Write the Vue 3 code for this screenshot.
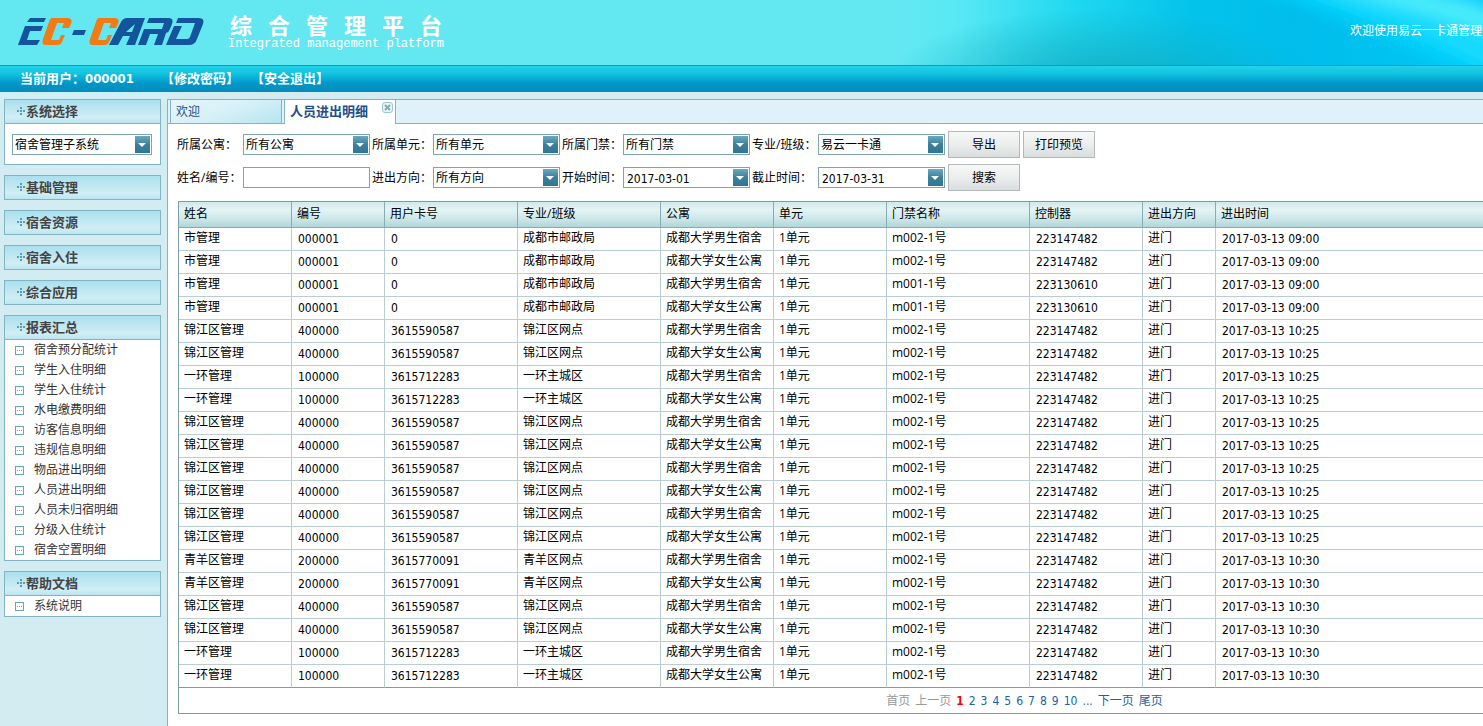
<script setup>
import { ref } from 'vue'

const system = ref('宿舍管理子系统')
const title = [...'综合管理平台']
const collapsed = ['基础管理', '宿舍资源', '宿舍入住', '综合应用']
const reports = [
  '宿舍预分配统计', '学生入住明细', '学生入住统计', '水电缴费明细', '访客信息明细', '违规信息明细',
  '物品进出明细', '人员进出明细', '人员未归宿明细', '分级入住统计', '宿舍空置明细'
]
const columns = ['姓名', '编号', '用户卡号', '专业/班级', '公寓', '单元', '门禁名称', '控制器', '进出方向', '进出时间']
const people = {
  s: ['市管理', '000001', '0', '成都市邮政局'],
  j: ['锦江区管理', '400000', '3615590587', '锦江区网点'],
  h: ['一环管理', '100000', '3615712283', '一环主城区'],
  q: ['青羊区管理', '200000', '3615770091', '青羊区网点']
}
const rows = [...'ssssjjhhjjjjjjqqjjhh'].map((k, i) => {
  const old = i === 2 || i === 3
  const time = i < 4 ? '09:00' : i < 14 ? '10:25' : '10:30'
  return [
    ...people[k],
    i % 2 ? '成都大学女生公寓' : '成都大学男生宿舍',
    '1单元',
    old ? 'm001-1号' : 'm002-1号',
    old ? '223130610' : '223147482',
    '进门',
    '2017-03-13 ' + time
  ]
})
const numeric = new Set([1, 2, 7, 9])
const pages = ['2', '3', '4', '5', '6', '7', '8', '9', '10', '...']
</script>

<template>
  <div class="page">
    <header class="banner">
      <svg class="art" viewBox="0 0 583 65" preserveAspectRatio="none" aria-hidden="true">
        <defs>
          <linearGradient id="sea" x1="0" y1="0" x2="1" y2="0">
            <stop offset="0" stop-color="#63e8f2" />
            <stop offset="0.1" stop-color="#58e8f4" />
            <stop offset="0.3" stop-color="#1fd8f0" />
            <stop offset="0.5" stop-color="#04c3ea" />
            <stop offset="0.68" stop-color="#00bdec" />
            <stop offset="1" stop-color="#00c8f4" />
          </linearGradient>
          <radialGradient id="shade">
            <stop offset="0" stop-color="#12a9bd" stop-opacity="0.85" />
            <stop offset="1" stop-color="#12a9bd" stop-opacity="0" />
          </radialGradient>
          <filter id="soft" x="-20%" y="-50%" width="140%" height="200%"><feGaussianBlur stdDeviation="7" /></filter>
        </defs>
        <rect width="583" height="65" fill="url(#sea)" />
        <ellipse cx="200" cy="80" rx="210" ry="72" fill="url(#shade)" />
        <g filter="url(#soft)">
          <path d="M350 -12 Q460 18 583 84 V-12Z" fill="#00d0fc" />
          <path d="M390 -12 Q490 18 600 75 V30 Q530 0 480 -12Z" fill="#12dafd" />
          <path d="M425 -12 Q510 8 600 36 V12 L510 -12Z" fill="#48ecfa" />
        </g>
      </svg>
      <svg class="logo" width="188" height="30" viewBox="0 0 188 30" role="img" aria-label="EC-CARD">
        <g fill="#12559c">
          <path d="M12 1H28L26 5H9ZM7 9H25L23 14H12L9 23H22L19 28H0Z" />
          <path d="M56 13H68L66 18H54Z" />
          <path d="M107 1H127L117 28H108L112 19H105L100 28H91L103 5Q105 1 109 1ZM117 7L108 15H114Z" />
          <path d="M131 1H151Q156 1 154 7L152 12Q151 15 148 16L144 28H136L140 17H132L128 28H120L126 12H144L146 6H129Z" />
          <path d="M160 1H181Q187 1 185 7L179 22Q177 28 171 28H148L156 9H164L158 22H169Q171 22 172 20L177 6H158Z" />
        </g>
        <g fill="#f07b17">
          <path d="M34 1H50Q55 1 53 7L51 11H44L46 6H39L33 23H41L43 18H47L44 25Q43 28 39 28H28Q23 28 25 22L31 5Q32 1 34 1Z" />
          <path d="M81 1H97Q102 1 100 7L98 11H91L93 6H86L80 23H88L90 18H94L91 25Q90 28 86 28H75Q70 28 72 22L78 5Q79 1 81 1Z" />
        </g>
      </svg>
      <div class="titles">
        <h1><span v-for="ch in title" :key="ch">{{ ch }}</span></h1>
        <p>Integrated management platform</p>
      </div>
      <p class="welcome">欢迎使用易云一卡通管理</p>
    </header>

    <nav class="userbar">
      <span class="current">当前用户：<b>000001</b></span>
      <a href="#password">【修改密码】</a>
      <a href="#logout">【安全退出】</a>
    </nav>

    <div class="body">
      <aside class="side">
        <section class="panel">
          <h2><i class="cross"></i>系统选择</h2>
          <div class="pick">
            <span class="combo">
              <select v-model="system" aria-label="系统选择"><option>宿舍管理子系统</option></select>
            </span>
          </div>
        </section>
        <section v-for="name in collapsed" :key="name" class="panel closed">
          <h2><i class="cross"></i>{{ name }}</h2>
        </section>
        <section class="panel">
          <h2><i class="cross"></i>报表汇总</h2>
          <ul>
            <li v-for="name in reports" :key="name"><a href="#report"><i class="leaf"></i>{{ name }}</a></li>
          </ul>
        </section>
        <section class="panel">
          <h2><i class="cross"></i>帮助文档</h2>
          <ul><li><a href="#help"><i class="leaf"></i>系统说明</a></li></ul>
        </section>
      </aside>

      <main class="main">
        <div class="tabs">
          <button type="button" class="tab">欢迎</button>
          <div class="tab active">
            <button type="button" class="name">人员进出明细</button>
            <button type="button" class="close" aria-label="关闭">
              <svg width="11" height="11" viewBox="0 0 11 11" aria-hidden="true">
                <rect x="0.5" y="0.5" width="10" height="10" rx="2.5" fill="#e6f4f4" stroke="#9cc6c8" />
                <path d="M3 3L8 8M8 3L3 8" stroke="#7fb0b4" stroke-width="2" />
              </svg>
            </button>
          </div>
        </div>

        <form class="filters" @submit.prevent>
          <label for="f1">所属公寓：</label>
          <span class="combo"><select id="f1"><option>所有公寓</option></select></span>
          <label for="f2">所属单元：</label>
          <span class="combo"><select id="f2"><option>所有单元</option></select></span>
          <label for="f3">所属门禁：</label>
          <span class="combo"><select id="f3"><option>所有门禁</option></select></span>
          <label for="f4">专业/班级：</label>
          <span class="combo"><select id="f4"><option>易云一卡通</option></select></span>
          <div class="actions">
            <button type="button">导出</button>
            <button type="button">打印预览</button>
          </div>
          <label for="f5">姓名/编号：</label>
          <input id="f5" type="text" class="plain" />
          <label for="f6">进出方向：</label>
          <span class="combo"><select id="f6"><option>所有方向</option></select></span>
          <label for="f7">开始时间：</label>
          <span class="combo date"><input id="f7" type="text" value="2017-03-01" /></span>
          <label for="f8">截止时间：</label>
          <span class="combo date"><input id="f8" type="text" value="2017-03-31" /></span>
          <div class="actions"><button type="submit">搜索</button></div>
        </form>

        <div class="grid">
          <table>
            <colgroup>
              <col class="w113" /><col class="w93" /><col class="w133" /><col class="w143" /><col class="w113" />
              <col class="w113" /><col class="w143" /><col class="w113" /><col class="w73" /><col />
            </colgroup>
            <thead>
              <tr><th v-for="c in columns" :key="c" scope="col">{{ c }}</th></tr>
            </thead>
            <tbody>
              <tr v-for="(row, r) in rows" :key="r">
                <td v-for="(cell, c) in row" :key="c" :class="{ num: numeric.has(c) }">{{ cell }}</td>
              </tr>
            </tbody>
          </table>
          <nav class="pager" aria-label="分页">
            <span class="off">首页</span>
            <span class="off">上一页</span>
            <b>1</b>
            <a v-for="p in pages" :key="p" class="digit" href="#page">{{ p }}</a>
            <a href="#next">下一页</a>
            <a href="#last">尾页</a>
          </nav>
        </div>
      </main>
    </div>
  </div>
</template>

<style>
body {
  margin: 0;
  background: #d3ecf2;
}
</style>

<style scoped>
.page {
  display: flex;
  flex-direction: column;
  height: 100vh;
  overflow: hidden;
  font: 12px/20px "Open Sans", "Noto Sans CJK SC", sans-serif;
  color: #000;
}
.page * {
  box-sizing: border-box;
}
h1, h2, p, ul {
  margin: 0;
  padding: 0;
}
a {
  color: inherit;
  text-decoration: none;
}
button, input, select {
  font: inherit;
  color: inherit;
}
.banner {
  position: relative;
  display: flex;
  flex: none;
  height: 65px;
  padding: 17px 0 0 18px;
  background: #63e8f2;
  overflow: hidden;
}
.art {
  position: absolute;
  top: 0;
  right: 0;
  width: 583px;
  height: 65px;
}
.logo {
  flex: none;
}
.titles {
  position: relative;
  margin: -6px 0 0 22px;
  color: #fff;
}
.titles h1 {
  display: flex;
  justify-content: space-between;
  padding: 0 2px;
  font: 700 22px/26px "Noto Sans CJK SC", sans-serif;
}
.titles p {
  font: 12px/14px "Liberation Mono", monospace;
  white-space: nowrap;
}
.welcome {
  position: relative;
  margin: 4px 1px 0 auto;
  height: 20px;
  color: #fff;
  white-space: nowrap;
}
.userbar {
  display: flex;
  flex: none;
  height: 27px;
  padding-left: 20px;
  border-top: 1px solid #1a97b7;
  background: linear-gradient(#22d2ea, #10c2de 30%, #0098cb 65%, #058bb9);
  color: #fff;
  font-size: 13px;
  font-weight: 700;
  line-height: 24px;
}
.userbar b {
  font-family: "DejaVu Sans Condensed", "DejaVu Sans", sans-serif;
}
.current {
  width: 141px;
}
.userbar a {
  width: 90px;
  white-space: nowrap;
}
.body {
  display: flex;
  flex: 1;
  min-height: 0;
}
.side {
  display: flex;
  flex: none;
  flex-direction: column;
  gap: 10px;
  width: 167px;
  padding: 7px 6px 0 4px;
  background: linear-gradient(#cdf0f8, #d3ecf2 20px);
}
.panel {
  border: 1px solid #83b4c1;
  background: #fff;
}
.panel h2 {
  display: flex;
  align-items: center;
  gap: 1px;
  height: 24px;
  padding: 0 0 2px 12px;
  border-bottom: 1px solid #83b4c1;
  background: linear-gradient(#a9e0ee, #bfe7f1 40%, #d0eef5 75%, #bbe6f1);
  color: #444;
  font-size: 13px;
  line-height: 20px;
}
.panel.closed h2 {
  height: 23px;
  border-bottom: 0;
}
.cross {
  flex: none;
  width: 8px;
  height: 8px;
  background:
    linear-gradient(#5d9cb0 0 0) 3px 0 / 2px 2px,
    linear-gradient(#5d9cb0 0 0) 0 3px / 2px 2px,
    linear-gradient(#5d9cb0 0 0) 3px 3px / 2px 2px,
    linear-gradient(#5d9cb0 0 0) 6px 3px / 2px 2px,
    linear-gradient(#5d9cb0 0 0) 3px 6px / 2px 2px;
  background-repeat: no-repeat;
}
.pick {
  padding: 10px 8px 9px 7px;
}
.panel ul {
  list-style: none;
}
.panel li a {
  display: flex;
  align-items: center;
  gap: 10px;
  height: 20px;
  padding-left: 10px;
  color: #333;
}
.leaf {
  width: 9px;
  height: 9px;
  border: 1px solid #6ba5b3;
  background:
    linear-gradient(#6ba5b3 0 0) 1px 3px / 1px 1px,
    linear-gradient(#6ba5b3 0 0) 3px 3px / 1px 1px,
    linear-gradient(#6ba5b3 0 0) 5px 3px / 1px 1px;
  background-repeat: no-repeat;
}
.combo {
  position: relative;
  display: block;
  height: 21px;
  border: 1px solid #7fa5ae;
  background: #fff;
}
.combo::after {
  content: "";
  position: absolute;
  top: 1px;
  right: 1px;
  width: 15px;
  height: 17px;
  background: linear-gradient(#6ba9c0, #3d7f9b 50%, #2f7696);
  pointer-events: none;
}
.combo::before {
  content: "";
  position: absolute;
  z-index: 1;
  top: 8px;
  right: 5px;
  border: 4px solid transparent;
  border-top-color: #fff;
  border-bottom: 0;
  pointer-events: none;
}
.combo select, .combo input {
  display: block;
  width: 100%;
  height: 19px;
  padding: 0 18px 0 2px;
  border: 0;
  outline: 0;
  background: transparent;
  line-height: 19px;
  appearance: none;
}
.date input {
  padding: 2px 18px 0 3px;
  font: 12px/17px "DejaVu Sans Condensed", "DejaVu Sans", sans-serif;
}
.main {
  flex: 1;
  min-width: 0;
  margin-top: 7px;
  border-left: 1px solid #83b4c1;
  border-top: 1px solid #83b4c1;
  background: #fff;
  overflow: hidden;
}
.tabs {
  display: flex;
  gap: 2px;
  height: 24px;
  padding-left: 2px;
  border-bottom: 1px solid #83b4c1;
  background: #dff2fa;
}
.tab {
  position: relative;
  width: 112px;
  height: 23px;
  padding: 0 5px;
  border: solid #83b4c1;
  border-width: 0 1px;
  background: linear-gradient(160deg, #e6f6fa, #d6f0f7 50%, #b5e5f1);
  color: #1f4f8c;
  line-height: 22px;
  text-align: left;
}
.tab.active {
  height: 24px;
  background: #fff;
}
.name {
  padding: 0;
  border: 0;
  background: none;
  font-size: 13px;
  font-weight: 700;
  line-height: 22px;
}
.close {
  position: absolute;
  top: 2px;
  right: 2px;
  width: 11px;
  height: 11px;
  padding: 0;
  border: 0;
  background: none;
}
.close svg {
  display: block;
}
.filters {
  display: grid;
  grid-template-columns: 66px 127px 63px 127px 63px 127px 68px 127px 1fr;
  grid-auto-rows: 27px;
  row-gap: 6px;
  align-items: center;
  padding: 7px 0 0 9px;
}
.filters label {
  padding-left: 2px;
  white-space: nowrap;
}
.filters label[for="f1"], .filters label[for="f5"] {
  padding-left: 0;
}
.plain {
  width: 100%;
  height: 21px;
  padding: 0 3px;
  border: 1px solid #7fa5ae;
  outline: 0;
}
.actions {
  display: flex;
  gap: 3px;
  padding-left: 3px;
}
.actions button {
  width: 72px;
  height: 27px;
  padding: 0;
  border: 1px solid #b3b9bb;
  background: linear-gradient(#f6f7f7, #eceeee 50%, #d9dddd);
}
.grid {
  min-width: 1693px;
  margin: 10px 0 0 10px;
  border: 1px solid #7b9ea6;
}
table {
  width: 100%;
  border-collapse: separate;
  border-spacing: 0;
  table-layout: fixed;
}
.w73 { width: 73px; }
.w93 { width: 93px; }
.w113 { width: 113px; }
.w133 { width: 133px; }
.w143 { width: 143px; }
th, td {
  padding: 0 0 2px 5px;
  border-right: 1px solid #b9cdd2;
  border-bottom: 1px solid #b9cdd2;
  font-weight: 400;
  text-align: left;
  white-space: nowrap;
  overflow: hidden;
}
th {
  height: 26px;
  border-color: #86adb1;
  background: linear-gradient(#cfe9ea, #e3f4f5 30%, #cfe8ea 65%, #b0d6d9);
  line-height: 22px;
}
td {
  height: 23px;
  line-height: 20px;
}
.num {
  padding: 0 0 0 6px;
  font-family: "DejaVu Sans Condensed", "DejaVu Sans", sans-serif;
}
tbody tr:last-child td {
  border-bottom-color: #7b9ea6;
}
.pager {
  display: flex;
  align-items: center;
  justify-content: center;
  gap: 5px;
  height: 25px;
  color: #1a5fa8;
}
.off {
  color: #999;
}
.pager b, .digit {
  font-family: "DejaVu Sans Condensed", "DejaVu Sans", sans-serif;
}
.pager b {
  color: #f00;
}
</style>
